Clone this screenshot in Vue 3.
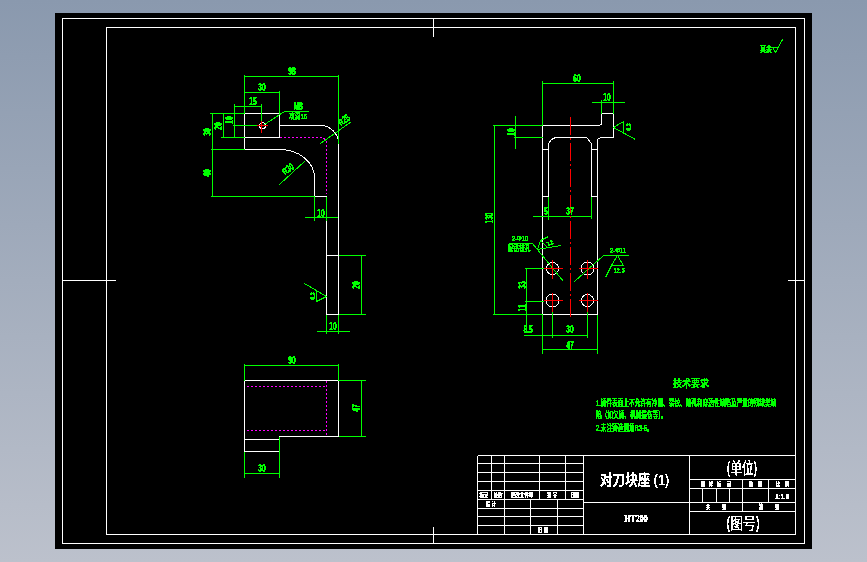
<template>
  <div class="stage">
    <div class="sheet">
      <svg class="drawing" viewBox="55 13 757 536" width="757" height="536">
        <defs>
          <filter id="crisp" x="0" y="0" width="100%" height="100%" color-interpolation-filters="sRGB">
            <feComponentTransfer>
              <feFuncA type="discrete" tableValues="0 1 1 1" />
            </feComponentTransfer>
          </filter>
        </defs>

        <g transform="translate(.5 .5)">
          <path class="line-white" :d="frame" />
          <path class="line-white" :d="block" />
          <path class="line-white" :d="sideView" />
          <path class="line-white" :d="frontView" />
          <path class="line-white" :d="planView" />
          <circle v-for="h in holes" :key="h.x + '-' + h.y" class="line-white" :cx="h.x" :cy="h.y" :r="h.r" />
          <path class="line-green" :d="dims" />
          <path class="line-magenta" :d="hidden" />
          <path class="line-red center" d="M570 116V317" />
          <path class="line-red" :d="crosses" />
        </g>

        <g filter="url(#crisp)">
          <text
            v-for="t in greenLabels"
            :key="t.s + t.x + t.y"
            class="label green"
            :font-size="t.size || 10"
            :transform="place(t, 0.66)"
          >{{ t.s }}</text>

          <text
            v-for="n in notes"
            :key="n.s"
            class="note"
            font-size="9"
            :transform="place(n, 0.63)"
          >{{ n.s }}</text>

          <text
            v-for="t in blockLabels"
            :key="t.s + t.x + t.y"
            class="label white"
            :font-size="t.size || 6"
            :transform="place(t, 0.75)"
          >{{ t.s }}</text>

          <text class="title" font-size="15" transform="translate(600 485) scale(.84 1)">对刀块座 (1)</text>
          <text class="label white thin" font-size="11" transform="translate(636 518) scale(.72 1)">HT200</text>
          <text class="label white big" font-size="16" transform="translate(742 467) scale(.72 1)">(单位)</text>
          <text class="label white big" font-size="16" transform="translate(743 522) scale(.8 1)">(图号)</text>
        </g>
      </svg>
    </div>
  </div>
</template>

<script setup>
// squeeze text sideways, the cad font is much narrower than anything installed
function place(t, sx) {
  return `translate(${t.x} ${t.y}) rotate(${t.r || 0}) scale(${t.sx || sx} 1)`
}

// frame and title block
const hLines = [
  [477, 583, 455], [477, 583, 463], [477, 583, 472], [477, 583, 481], [477, 583, 490],
  [477, 583, 499], [477, 583, 508], [477, 583, 516], [477, 583, 525],
  [583, 795, 455], [583, 795, 502], [689, 795, 479], [689, 795, 488], [689, 795, 511]
]
const vLines = [
  [477, 455, 534], [491, 455, 499], [504, 455, 534], [539, 455, 499], [565, 455, 499],
  [530, 499, 534], [557, 499, 534], [583, 455, 534], [689, 455, 534],
  [742, 479, 511], [768, 479, 502], [702, 488, 502], [716, 488, 502], [729, 488, 502]
]
const frame = [
  'M62 18H804V543H62Z',
  'M106 27H795V534H106Z',
  'M433 18V36M433 526V543M62 280H115M787 280H804',
  ...hLines.map(([a, b, y]) => `M${a} ${y}H${b}`),
  ...vLines.map(([x, a, b]) => `M${x} ${a}V${b}`)
].join('')

// left view
const block =
  'M244 113H279V137H244ZM244 137V149H279A35 28 0 0 1 314 177V196H326V314H338V143A18 18 0 0 0 320 125H279'
const sideView = 'M326 255H338M326 314H338'

// right view
const frontView =
  'M542 125H598L601 124V113H613V137H600L597 139V314H542ZM548 196V143L551 139L555 137H586L591 143V196' +
  'M542 149H548M591 149H597M542 196H548M591 196H597'

// bottom view
const planView = 'M244 380H338V436H279V451H244ZM244 439H279'

const holes = [
  { x: 262, y: 125, r: 3 },
  { x: 552, y: 268, r: 6 },
  { x: 587, y: 268, r: 6.5 },
  { x: 552, y: 300, r: 6.5 },
  { x: 587, y: 300, r: 6 }
]

const hidden = [
  'M279 137H322L326 140V193',
  'M246 386H326M246 430H326M326 380V436'
].join('')

const crosses = [
  'M261 120V132M256 125H267',
  'M552 259V278M543 268H562',
  'M587 259V278M578 268H597',
  'M552 292V311M543 300H562',
  'M587 292V311M578 300H597'
].join('')

const dims = [
  // left view
  'M244 74V113M338 74V143M244 76H338',
  'M244 92H279M279 90V113',
  'M234 106H261M261 103V128M234 103V136M232 125H261',
  'M223 113V137M212 113V196',
  'M209 113H244M220 137H244M210 149H244M210 196H314',
  'M264 124L284 111H308',
  'M320 143L351 121M279 184L305 160',
  'M314 196V220M326 196V220M304 217H337',
  'M338 255H365M338 314H365M361 255V314',
  'M326 314V333M338 314V333M316 331H349',
  'M304 283L326 296L316 301M316 290V301',
  // right view
  'M542 80V125M613 80V113M542 83H613',
  'M591 102H624M601 99V113',
  'M492 125H542M513 137H542M515 115V148M494 125V314M492 314H542',
  'M613 127L623 121V133M613 127L635 139',
  'M548 196V219M591 196V218M532 216H591',
  'M508 243H532L563 281',
  'M537 249L540 240L548 236M540 240L548 248M537 249L561 245',
  'M574 281L603 255H628M617 255L611 265H623ZM611 265L605 277',
  'M524 268H543M524 301H543M526 268V325',
  'M552 311V337M587 310V337M523 335H587',
  'M542 314V353M597 314V353M542 349H597',
  // bottom view
  'M244 363V380M338 363V380M244 365H338',
  'M338 380H365M338 436H365M361 380V436',
  'M244 451V477M279 436V477M244 473H279',
  // surface mark top right
  'M772 47L775 52L782 39M772 47H777'
].join('')

const greenLabels = [
  { s: '98', x: 292, y: 71 },
  { s: '30', x: 262, y: 87 },
  { s: '15', x: 253, y: 101 },
  { s: '10', x: 229, y: 120, r: -90 },
  { s: '20', x: 218, y: 126, r: -90 },
  { s: '30', x: 207, y: 132, r: -90 },
  { s: '40', x: 207, y: 173, r: -90 },
  { s: 'M8', x: 298, y: 106 },
  { s: '攻深16', x: 298, y: 116, size: 8, sx: 0.72 },
  { s: 'R25', x: 344, y: 120, r: -37 },
  { s: 'R30', x: 288, y: 169, r: -37 },
  { s: '10', x: 321, y: 213 },
  { s: '20', x: 356, y: 285, r: -90 },
  { s: '10', x: 333, y: 326 },
  { s: '6.3', x: 312, y: 296, r: -90, size: 8 },
  { s: '60', x: 577, y: 78 },
  { s: '10', x: 607, y: 97 },
  { s: '10', x: 511, y: 132, r: -90 },
  { s: '130', x: 489, y: 218, r: -90 },
  { s: '6.3', x: 628, y: 127, r: -90, size: 8 },
  { s: '5', x: 546, y: 211 },
  { s: '37', x: 570, y: 211 },
  { s: '2-Φ10', x: 520, y: 238, size: 8, sx: 0.72 },
  { s: '配钻铰孔', x: 519, y: 248, size: 8, sx: 0.72 },
  { s: '3.2', x: 550, y: 243, r: -30, size: 7 },
  { s: '2-Φ11', x: 618, y: 250, size: 8, sx: 0.72 },
  { s: '12.5', x: 619, y: 270, size: 8, sx: 0.72 },
  { s: '33', x: 522, y: 285, r: -90 },
  { s: '11', x: 522, y: 308, r: -90 },
  { s: '8.5', x: 528, y: 329 },
  { s: '30', x: 570, y: 329 },
  { s: '47', x: 570, y: 345 },
  { s: '90', x: 292, y: 360 },
  { s: '47', x: 356, y: 408, r: -90 },
  { s: '30', x: 262, y: 468 },
  { s: '技术要求', x: 691, y: 383, size: 10, sx: 0.9 },
  { s: '其余', x: 766, y: 49, size: 8, sx: 0.75 }
]

const notes = [
  { s: '1.铸件表面上不允许有冷隔、裂纹、缩孔和穿透性缺陷及严重的残缺类缺', x: 596, y: 406 },
  { s: '陷（如欠铸、机械损伤等）。', x: 596, y: 418 },
  { s: '2.未注铸造圆角R3-5。', x: 596, y: 431 }
]

const blockLabels = [
  { s: '标记', x: 484, y: 495 },
  { s: '处数', x: 498, y: 495 },
  { s: '更改文件号', x: 522, y: 495 },
  { s: '签 字', x: 552, y: 495 },
  { s: '日期', x: 575, y: 495 },
  { s: '设 计', x: 491, y: 504 },
  { s: '日 期', x: 543, y: 530 },
  { s: '图', x: 703, y: 484 },
  { s: '样', x: 711, y: 484 },
  { s: '标', x: 719, y: 484 },
  { s: '记', x: 729, y: 484 },
  { s: '重', x: 751, y: 484 },
  { s: '量', x: 760, y: 484 },
  { s: '比', x: 778, y: 484 },
  { s: '例', x: 787, y: 484 },
  { s: '1:1.5', x: 782, y: 496, size: 8 },
  { s: '共', x: 708, y: 507 },
  { s: '张', x: 724, y: 507 },
  { s: '第', x: 761, y: 507 },
  { s: '张', x: 777, y: 507 }
]
</script>

<style scoped>
.stage {
  width: 867px;
  height: 562px;
  padding: 13px 55px;
  box-sizing: border-box;
  background: linear-gradient(#8a99ae, #bcc1cc);
}

.sheet {
  width: 757px;
  height: 536px;
  background: #000;
}

.drawing {
  display: block;
}

.line-white,
.line-green,
.line-magenta,
.line-red {
  fill: none;
  stroke-width: 1;
  shape-rendering: crispEdges;
}

.line-white {
  stroke: #fff;
}

.line-green {
  stroke: #00ff00;
}

.line-magenta {
  stroke: #ff00ff;
  stroke-dasharray: 2 2;
}

.line-red {
  stroke: #ff0000;
}

.center {
  stroke-dasharray: 18 3 2 3;
}

.label,
.note,
.title {
  font-family: "Liberation Sans", "Noto Sans CJK SC", sans-serif;
}

.label {
  text-anchor: middle;
  dominant-baseline: central;
  font-weight: 700;
}

.label.thin {
  font-family: "Liberation Serif", serif;
}

.label.big {
  font-family: "Noto Sans CJK SC", sans-serif;
  font-weight: 400;
}

.green {
  fill: #00ff00;
}

.white {
  fill: #fff;
}

.note {
  fill: #00ff00;
  font-weight: 700;
}

.title {
  fill: #fff;
  font-weight: 500;
}
</style>

<style>
html,
body {
  margin: 0;
  background: #8c9bb0;
}
</style>
